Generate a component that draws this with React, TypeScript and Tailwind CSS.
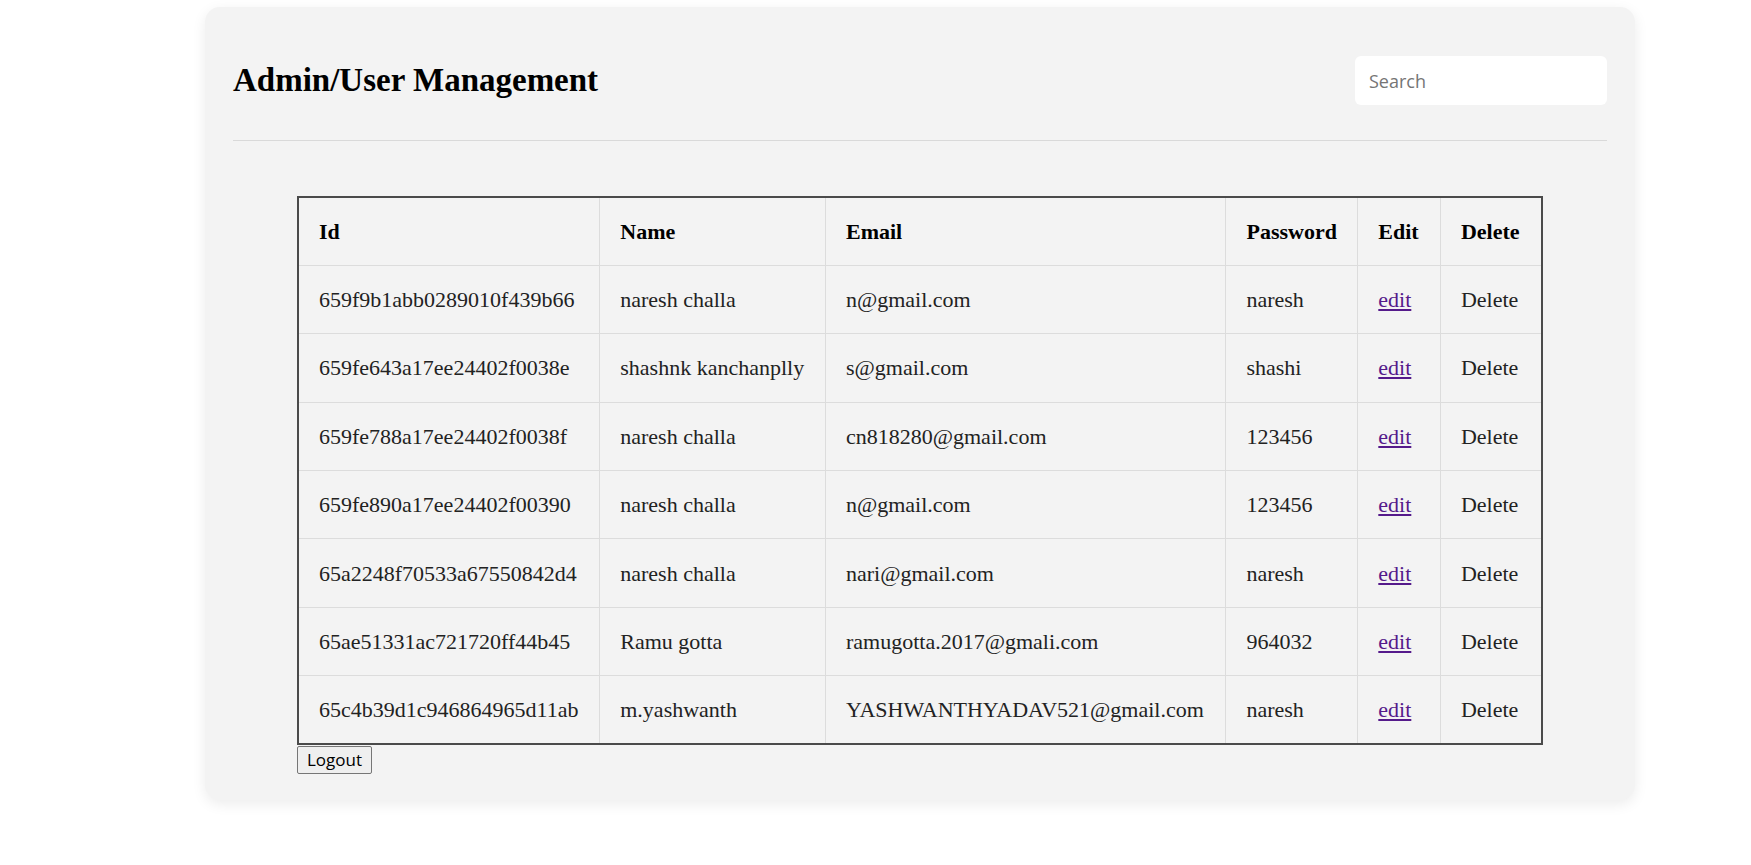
const users = [
  { id: "659f9b1abb0289010f439b66", name: "naresh challa", email: "n@gmail.com", password: "naresh" },
  { id: "659fe643a17ee24402f0038e", name: "shashnk kanchanplly", email: "s@gmail.com", password: "shashi" },
  { id: "659fe788a17ee24402f0038f", name: "naresh challa", email: "cn818280@gmail.com", password: "123456" },
  { id: "659fe890a17ee24402f00390", name: "naresh challa", email: "n@gmail.com", password: "123456" },
  { id: "65a2248f70533a67550842d4", name: "naresh challa", email: "nari@gmail.com", password: "naresh" },
  { id: "65ae51331ac721720ff44b45", name: "Ramu gotta", email: "ramugotta.2017@gmali.com", password: "964032" },
  { id: "65c4b39d1c946864965d11ab", name: "m.yashwanth", email: "YASHWANTHYADAV521@gmail.com", password: "naresh" },
];

export default function App() {
  return (
    <div className="min-h-[865px] bg-white pt-[7px] pl-[205px]">
      <div className="w-[1430px] rounded-[15px] bg-[#f3f3f3] px-[28px] pt-[28px] pb-[26px] shadow-[0_4px_14px_rgba(0,0,0,0.08)]">
        {/* header */}
        <div className="flex h-[91px] items-center justify-between">
          <h1 className="text-[33px] font-bold text-black" style={{ fontFamily: '"Liberation Serif", serif' }}>
            Admin/User Management
          </h1>
          <input
            type="text"
            placeholder="Search"
            className="h-[49px] w-[252px] rounded-[6px] bg-white px-[14px] text-[18px] text-black outline-none placeholder:text-[#757575]"
            style={{ fontFamily: '"Open Sans", "Liberation Sans", sans-serif' }}
          />
        </div>
        <div className="mt-[14px] h-px bg-[#d9d9d9]" />

        <div className="mx-16 mt-[55px]" style={{ fontFamily: '"Liberation Serif", serif' }}>
          <table className="w-full border-collapse border-2 border-[#4a4a4a] text-[22px] text-[#222]">
            <colgroup>
              <col className="w-[302px]" />
              <col className="w-[226px]" />
              <col className="w-[401px]" />
              <col className="w-[132px]" />
              <col className="w-[83px]" />
              <col className="w-[102px]" />
            </colgroup>
            <thead>
              <tr className="h-[68.4px] text-left font-bold text-black">
                <th className="border border-[#dcdcdc] px-[20px]">Id</th>
                <th className="border border-[#dcdcdc] px-[20px]">Name</th>
                <th className="border border-[#dcdcdc] px-[20px]">Email</th>
                <th className="border border-[#dcdcdc] px-[20px]">Password</th>
                <th className="border border-[#dcdcdc] px-[20px]">Edit</th>
                <th className="border border-[#dcdcdc] px-[20px]">Delete</th>
              </tr>
            </thead>
            <tbody>
              {users.map((u) => (
                <tr key={u.id} className="h-[68.4px]">
                  <td className="border border-[#dcdcdc] px-[20px] whitespace-nowrap">{u.id}</td>
                  <td className="border border-[#dcdcdc] px-[20px] whitespace-nowrap">{u.name}</td>
                  <td className="border border-[#dcdcdc] px-[20px] whitespace-nowrap">{u.email}</td>
                  <td className="border border-[#dcdcdc] px-[20px]">{u.password}</td>
                  <td className="border border-[#dcdcdc] px-[20px]">
                    <a href="#" className="text-[#551a8b] underline">edit</a>
                  </td>
                  <td className="border border-[#dcdcdc] px-[20px]">Delete</td>
                </tr>
              ))}
            </tbody>
          </table>
          <button
            className="mt-px h-[28px] rounded-[2px] border border-[#767676] bg-[#efefef] px-[9px] text-[17px] text-black"
            style={{ fontFamily: '"Open Sans", "Liberation Sans", sans-serif' }}
          >
            Logout
          </button>
        </div>
      </div>
    </div>
  );
}
